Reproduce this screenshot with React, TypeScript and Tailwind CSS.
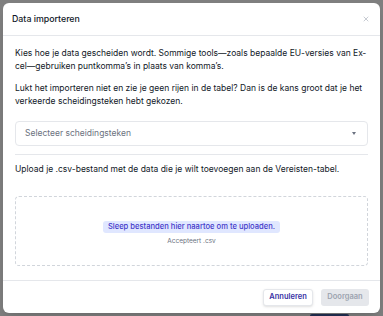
import { X } from "lucide-react";

export default function App() {
    return (
        <div
            className="flex h-[316px] w-[383px] flex-col bg-[#7f7f7f] px-[3px] pt-[3px]"
            style={{ fontFamily: "Inter, 'Noto Sans', sans-serif" }}
        >
            <div className="flex h-[310px] flex-col rounded-[6px] bg-white shadow-lg">

                {/* Header */}
                <div className="flex h-[33px] items-center justify-between border-b border-[#e5e7eb] pl-[9px] pr-[10px]">
                    <h2 className="text-[8.8px] font-medium text-[#111827]">Data importeren</h2>
                    <button className="text-[#9ca3af]">
                        <X size={8} strokeWidth={1.7} />
                    </button>
                </div>

                {/* Body */}
                <div className="flex flex-1 flex-col px-[12px] pt-[11px] text-[8.5px] leading-[13px] text-[#111827]">
                    <p>
                        Kies hoe je data gescheiden wordt. Sommige tools—zoals bepaalde EU-versies van Ex{"\u00AD"}cel—gebruiken puntkomma’s in plaats van komma’s.
                    </p>
                    <p className="mt-[9px]">
                        Lukt het importeren niet en zie je geen rijen in de tabel? Dan is de kans groot dat je het verkeerde scheidingsteken hebt gekozen.
                    </p>

                    <button className="mt-[13px] flex h-[25px] items-center justify-between rounded-[4px] border border-[#e5e7eb] pl-[9px] pr-[11px] text-left text-[#6b7280]">
                        <span>Selecteer scheidingsteken</span>
                        <svg width="4" height="3" viewBox="0 0 4 3" className="text-[#6b7280]">
                            <path d="M0 0h4L2 3z" fill="currentColor" />
                        </svg>
                    </button>

                    <div className="mt-[8px] border-t border-[#e5e7eb]" />

                    <p className="mt-[8px]">
                        Upload je .csv-bestand met de data die je wilt toevoegen aan de Vereisten-tabel.
                    </p>

                    {/* Dropzone */}
                    <div className="mt-[20px] flex h-[70px] flex-col items-center justify-center rounded-[4px] border border-dashed border-[#d1d5db] pt-[5px]">
                        <span className="rounded-[3px] bg-[#e0e7ff] px-[5px] py-[1px] text-[7.6px] font-medium leading-[10px] text-[#4338ca]">
                            Sleep bestanden hier naartoe om te uploaden.
                        </span>
                        <span className="mt-[4px] text-[6.5px] leading-[9px] text-[#6b7280]">Accepteert .csv</span>
                    </div>
                </div>

                {/* Footer */}
                <div className="flex h-[33px] items-center justify-end gap-[8px] border-t border-[#e5e7eb] px-[11px]">
                    <button className="h-[17px] w-[50px] rounded-[3px] border border-[#e5e7eb] bg-white text-[7.5px] font-semibold text-[#3730a3] shadow-sm">
                        Annuleren
                    </button>
                    <button className="h-[17px] w-[48px] rounded-[3px] bg-[#e5e7eb] text-[7.5px] font-semibold text-[#9ca3af]">
                        Doorgaan
                    </button>
                </div>
            </div>

            {/* page behind the overlay */}
            <div className="flex justify-end pr-[31px] pt-[1px]">
                <div className="h-[2px] w-[39px] rounded-t-[2px] bg-[#1e2a4a]" />
            </div>
        </div>
    );
}
